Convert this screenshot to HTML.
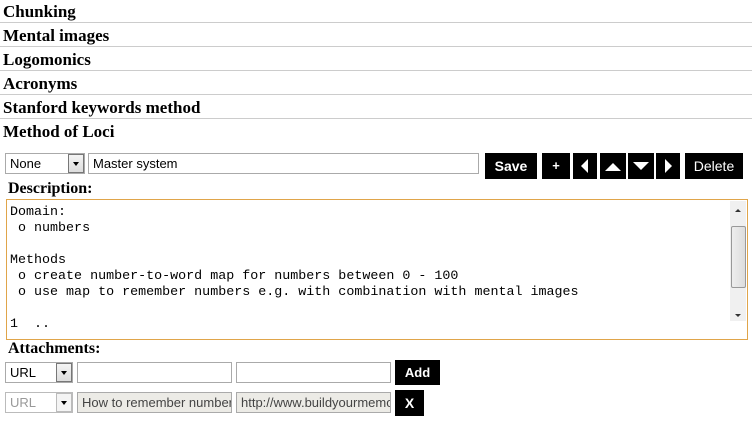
<!DOCTYPE html>
<html><head><style>
body{margin:0;width:752px;height:424px;overflow:hidden;background:#fff;font-family:"Liberation Sans",Arial,sans-serif;position:relative}
.h{position:absolute;left:0;width:752px;height:23px;border-bottom:1px solid #ccc;font:bold 17px "Liberation Serif",serif;line-height:23px;padding-left:3px;box-sizing:border-box}
.a{position:absolute}
.sel{position:absolute;border:1px solid #aaa;box-sizing:border-box;font-size:13px;line-height:19px;padding-left:4px;background:#fff}
.sel .ar{position:absolute;right:0;top:0;width:16px;height:100%;background:linear-gradient(#f4f4f4,#ddd);box-sizing:border-box;border:1px solid #777}
.sel .ar:after{content:"";position:absolute;left:4px;top:7px;border-left:3px solid transparent;border-right:3px solid transparent;border-top:4px solid #000}
.inp{position:absolute;border:1px solid #aaa;box-sizing:border-box;font-size:13px;line-height:19px;padding-left:4px;white-space:nowrap;overflow:hidden}
.b{position:absolute;background:#000;color:#fff;font-size:13px;font-weight:bold;text-align:center}
.lbl{position:absolute;font:bold 16px "Liberation Serif",serif}
pre{margin:0;position:absolute;left:10px;top:205px;font:13.35px/16px "Liberation Mono",monospace;color:#000}
</style></head><body>
<div class="h" style="top:0">Chunking</div>
<div class="h" style="top:24px">Mental images</div>
<div class="h" style="top:48px">Logomonics</div>
<div class="h" style="top:72px">Acronyms</div>
<div class="h" style="top:96px">Stanford keywords method</div>
<div class="h" style="top:120px;border:none">Method of Loci</div>

<div class="sel" style="left:5px;top:153px;width:80px;height:21px">None<div class="ar"></div></div>
<div class="inp" style="left:88px;top:153px;width:391px;height:21px">Master system</div>
<div class="b" style="left:485px;top:153px;width:52px;height:26px;line-height:26px;font-size:14px">Save</div>
<div class="b" style="left:542px;top:153px;width:28px;height:26px;line-height:26px">+</div>
<div class="b" style="left:573px;top:153px;width:24px;height:26px"><svg width="24" height="26"><path d="M8 13L15 6V20Z" fill="#fff"/></svg></div>
<div class="b" style="left:600px;top:153px;width:26px;height:26px"><svg width="26" height="26"><path d="M5 18L13 10L21 18Z" fill="#fff"/></svg></div>
<div class="b" style="left:628px;top:153px;width:26px;height:26px"><svg width="26" height="26"><path d="M5 9L13 17L21 9Z" fill="#fff"/></svg></div>
<div class="b" style="left:656px;top:153px;width:24px;height:26px"><svg width="24" height="26"><path d="M9 6L16 13L9 20Z" fill="#fff"/></svg></div>
<div class="b" style="left:685px;top:153px;width:58px;height:26px;line-height:26px;font-weight:normal;font-size:14px">Delete</div>

<div class="lbl" style="left:8px;top:180px">Description:</div>
<div class="a" style="left:6px;top:199px;width:742px;height:141px;border:1px solid #e0a54a;box-sizing:border-box;overflow:hidden">
<div class="a" style="right:1px;top:1px;width:16px;height:120px;background:#f0f0f0">
<div class="a" style="left:5px;top:8px;border-left:3px solid transparent;border-right:3px solid transparent;border-bottom:3px solid #333"></div>
<div class="a" style="left:1px;top:25px;width:13px;height:60px;background:linear-gradient(90deg,#eee,#ddd);border:1px solid #999;border-radius:2px"></div>
<div class="a" style="left:5px;top:113px;border-left:3px solid transparent;border-right:3px solid transparent;border-top:3px solid #333"></div>
</div></div>
<pre>Domain:
 o numbers

Methods
 o create number-to-word map for numbers between 0 - 100
 o use map to remember numbers e.g. with combination with mental images

1  ..</pre>

<div class="lbl" style="left:8px;top:340px">Attachments:</div>
<div class="sel" style="left:5px;top:362px;width:68px;height:21px">URL<div class="ar"></div></div>
<div class="inp" style="left:77px;top:362px;width:155px;height:21px"></div>
<div class="inp" style="left:236px;top:362px;width:155px;height:21px"></div>
<div class="b" style="left:395px;top:360px;width:45px;height:25px;line-height:25px">Add</div>
<div class="sel" style="left:5px;top:392px;width:68px;height:21px;color:#999;border-color:#bbb">URL<div class="ar" style="border-color:#bbb;background:#f4f4f4"></div></div>
<div class="inp" style="left:77px;top:392px;width:155px;height:21px;background:#ecebe6;color:#444">How to remember numbers</div>
<div class="inp" style="left:236px;top:392px;width:155px;height:21px;background:#ecebe6;color:#444">http://www.buildyourmemory</div>
<div class="b" style="left:395px;top:390px;width:29px;height:26px;line-height:26px;font-size:14px">X</div>
</body></html>
